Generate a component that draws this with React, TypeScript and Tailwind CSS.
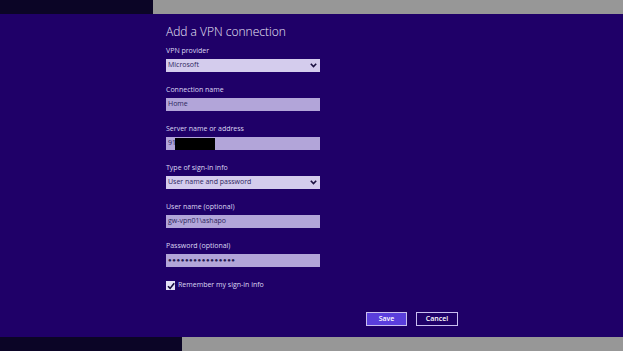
import React from 'react';

const Label = ({ text }: { text: string }) => (
  <div className="h-[10px] text-[7px] leading-[10px] text-[#ddd8f3] mb-[3px]">{text}</div>
);

const Chevron = () => (
  <svg width="7" height="5" viewBox="0 0 7 5" className="mr-[3px]">
    <path d="M0.8 0.8 L3.5 3.6 L6.2 0.8" fill="none" stroke="#1a1040" strokeWidth="1.6" />
  </svg>
);

const SelectBox = ({ value }: { value: string }) => (
  <div className="h-[13px] w-[154px] bg-[#d4cced] flex items-center justify-between pl-[2px] text-[7px] text-[#2e2560]">
    <span>{value}</span>
    <Chevron />
  </div>
);

const TextBox = ({ children }: { children: React.ReactNode }) => (
  <div className="h-[13px] w-[154px] bg-[#b2a5d9] flex items-center pl-[2px] text-[7px] text-[#2e2560]">
    {children}
  </div>
);

const App = () => {
  return (
    <div
      className="w-[623px] h-[351px] flex flex-col bg-[#1f0068] overflow-hidden"
      style={{ fontFamily: '"Open Sans", "Liberation Sans", sans-serif' }}
    >
      <div className="h-[14px] flex">
        <div className="w-[153px] bg-[#0b0526]"></div>
        <div className="flex-1 bg-[#979797]"></div>
      </div>

      <div className="flex-1 pl-[166px] pt-[9px]">
        <div className="text-[12px] leading-[17px] font-light text-[#ece9fa] mb-[6px]">Add a VPN connection</div>

        <div className="mb-[13px]">
          <Label text="VPN provider" />
          <SelectBox value="Microsoft" />
        </div>
        <div className="mb-[13px]">
          <Label text="Connection name" />
          <TextBox>Home</TextBox>
        </div>
        <div className="mb-[13px]">
          <Label text="Server name or address" />
          <TextBox>
            <span>91</span>
            <span className="bg-black h-[12px] w-[40px] -ml-[1px]"></span>
          </TextBox>
        </div>
        <div className="mb-[13px]">
          <Label text="Type of sign-in info" />
          <SelectBox value="User name and password" />
        </div>
        <div className="mb-[13px]">
          <Label text="User name (optional)" />
          <TextBox>gw-vpn01\ashapo</TextBox>
        </div>
        <div className="mb-[14px]">
          <Label text="Password (optional)" />
          <TextBox>
            <span className="tracking-[0.6px] text-[6px] leading-[13px] text-[#241a50]">●●●●●●●●●●●●●●●●</span>
          </TextBox>
        </div>

        <div className="flex items-center h-[9px] mb-[22px]">
          <div className="w-[9px] h-[9px] bg-[#e4dff6] flex items-center justify-center mr-[3px]">
            <svg width="8" height="8" viewBox="0 0 8 8">
              <path d="M1 4.2 L3.1 6.4 L7.2 1.2" fill="none" stroke="#140a3a" strokeWidth="1.6" />
            </svg>
          </div>
          <span className="text-[7px] text-[#ddd8f3]">Remember my sign-in info</span>
        </div>

        <div className="flex w-[292px] justify-end gap-[9px]">
          <div className="w-[41px] h-[14px] bg-[#5a3edc] border border-[#c9bef0] flex items-center justify-center text-[7px] font-semibold text-white">
            Save
          </div>
          <div className="w-[42px] h-[14px] border border-[#c9bef0] flex items-center justify-center text-[7px] font-semibold text-white">
            Cancel
          </div>
        </div>
      </div>

      <div className="h-[14px] flex">
        <div className="w-[182px] bg-[#0b0526]"></div>
        <div className="flex-1 bg-[#979797]"></div>
      </div>
    </div>
  );
};

export default App;
